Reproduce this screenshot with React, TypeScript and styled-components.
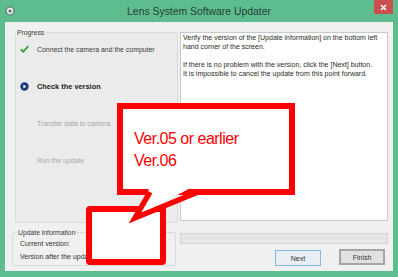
import styled, { createGlobalStyle } from "styled-components";

const GlobalStyle = createGlobalStyle`
  html, body {
    margin: 0;
    padding: 0;
    background: #ffffff;
  }
  body {
    font-family: "Liberation Sans", Arial, sans-serif;
  }
  * {
    box-sizing: border-box;
  }
`;

type StepState = "done" | "current" | "todo";

const steps: { label: string; state: StepState }[] = [
  { label: "Connect the camera and the computer", state: "done" },
  { label: "Check the version", state: "current" },
  { label: "Transfer data to camera", state: "todo" },
  { label: "Run the update", state: "todo" },
];

function StepIcon({ state }: { state: StepState }) {
  if (state === "done") {
    return (
      <svg width="9" height="8" viewBox="0 0 9 8">
        <path d="M0.8 4.2 L3.3 6.6 L8.3 1.2" fill="none" stroke="#37a13c" strokeWidth="1.9" />
      </svg>
    );
  }
  if (state === "current") {
    return (
      <svg width="9" height="9" viewBox="0 0 9 9">
        <circle cx="4.5" cy="4.5" r="4.2" fill="#1d3a78" />
        <path d="M3.4 2.6 L6.3 4.5 L3.4 6.4 Z" fill="#ffffff" />
      </svg>
    );
  }
  return null;
}

export default function App() {
  return (
    <>
      <GlobalStyle />
      <Window>
        <TitleBar>
          <AppIcon>
            <svg width="10" height="10" viewBox="0 0 10 10">
              <circle cx="5" cy="5" r="4" fill="#e4ece8" stroke="#66766e" strokeWidth="1.2" />
              <circle cx="5" cy="5" r="1.6" fill="#66766e" />
            </svg>
          </AppIcon>
          <Title>Lens System Software Updater</Title>
          <CloseButton>
            <svg width="7" height="7" viewBox="0 0 7 7">
              <path d="M1 1 L6 6 M6 1 L1 6" stroke="#ffffff" strokeWidth="1.5" />
            </svg>
          </CloseButton>
        </TitleBar>
        <Client>
          <TopRow>
            <ProgressGroup>
              <Legend>Progress</Legend>
              <StepList>
                {steps.map((step) => (
                  <Step key={step.label}>
                    <IconSlot>
                      <StepIcon state={step.state} />
                    </IconSlot>
                    <StepLabel $state={step.state}>{step.label}</StepLabel>
                  </Step>
                ))}
              </StepList>
            </ProgressGroup>
            <TextPane>
              <p>
                Verify the version of the [Update information] on the bottom left
                <br />
                hand corner of the screen.
              </p>
              <p>
                If there is no problem with the version, click the [Next] button.
                <br />
                It is impossible to cancel the update from this point forward.
              </p>
            </TextPane>
          </TopRow>
          <BottomRow>
            <UpdateGroup>
              <Legend $inset={4}>Update information</Legend>
              <InfoList>
                <InfoRow>Current version:</InfoRow>
                <InfoRow>Version after the update:</InfoRow>
              </InfoList>
            </UpdateGroup>
            <ActionColumn>
              <ProgressBar />
              <ButtonRow>
                <DialogButton $focused>Next</DialogButton>
                <DialogButton $isDefault>Finish</DialogButton>
              </ButtonRow>
            </ActionColumn>
          </BottomRow>
        </Client>

        <Callout>
          <CalloutLine>Ver.05 or earlier</CalloutLine>
          <CalloutLine>Ver.06</CalloutLine>
        </Callout>
        <TargetBox />
        <Tail viewBox="0 0 398 277" width="398" height="277">
          <polygon points="151,185 196,185 135,218" fill="#ffffff" />
          <polyline
            points="150,192 135,218 198,192"
            fill="none"
            stroke="#ff0000"
            strokeWidth="5.5"
            strokeLinejoin="miter"
          />
        </Tail>
      </Window>
    </>
  );
}

const Window = styled.div`
  position: relative;
  width: 398px;
  height: 277px;
  background: #5ebd8e;
  display: flex;
  flex-direction: column;
  padding: 0 5px 6px 5px;
  overflow: hidden;
`;

const TitleBar = styled.div`
  height: 22px;
  display: grid;
  grid-template-columns: 1fr auto 1fr;
  align-items: center;
`;

const AppIcon = styled.div`
  justify-self: start;
  display: flex;
  margin-top: -1px;
`;

const Title = styled.div`
  font-size: 10.4px;
  color: #263d33;
  margin-top: 1px;
`;

const CloseButton = styled.div`
  justify-self: end;
  align-self: start;
  width: 19px;
  height: 14px;
  background: #c9504f;
  display: flex;
  align-items: center;
  justify-content: center;
`;

const Client = styled.div`
  flex: 1;
  background: #f0f0f0;
  display: flex;
  flex-direction: column;
  padding-top: 6px;
`;

const TopRow = styled.div`
  display: flex;
  align-items: flex-start;
  gap: 2px;
  padding-left: 10px;
`;

const ProgressGroup = styled.fieldset`
  width: 163px;
  height: 195px;
  margin: 0;
  padding: 0;
  border: 1px solid #dadada;
  border-radius: 2px;
  background: #ebebeb;
`;

const Legend = styled.legend<{ $inset?: number }>`
  font-size: 6.8px;
  line-height: 9px;
  padding: 0 1px;
  margin-left: ${(p) => p.$inset ?? 0}px;
  color: #3a3a3a;
`;

const StepList = styled.div`
  display: flex;
  flex-direction: column;
  gap: 23px;
  padding: 5px 0 0 4px;
`;

const Step = styled.div`
  display: flex;
  align-items: center;
  gap: 8px;
  height: 14px;
`;

const IconSlot = styled.div`
  width: 9px;
  display: flex;
  justify-content: center;
`;

const StepLabel = styled.span<{ $state: StepState }>`
  font-size: ${(p) => (p.$state === "current" ? "7.4px" : "6.9px")};
  font-weight: ${(p) => (p.$state === "current" ? 700 : 400)};
  color: ${(p) =>
    p.$state === "current" ? "#1c1c1c" : p.$state === "done" ? "#3a3a3a" : "#a8a8a8"};
`;

const TextPane = styled.div`
  margin-top: 4px;
  width: 208px;
  height: 189px;
  background: #ffffff;
  border: 1px solid #c9c9c9;
  padding: 0 2px;
  font-size: 7px;
  line-height: 9px;
  color: #2a2a2a;
  white-space: nowrap;
  p {
    margin: 0 0 9px 0;
  }
`;

const BottomRow = styled.div`
  display: flex;
  align-items: flex-start;
  gap: 4px;
  padding-left: 7px;
  margin-top: 5px;
`;

const UpdateGroup = styled.fieldset`
  width: 164px;
  height: 38px;
  margin: 0;
  padding: 0;
  border: 1px solid #dadada;
  border-radius: 2px;
`;

const InfoList = styled.div`
  display: flex;
  flex-direction: column;
  padding-left: 7px;
`;

const InfoRow = styled.div`
  font-size: 7px;
  line-height: 13px;
  color: #333333;
  white-space: nowrap;
`;

const ActionColumn = styled.div`
  width: 208px;
  display: flex;
  flex-direction: column;
`;

const ProgressBar = styled.div`
  margin-top: 5px;
  height: 11px;
  background: #e6e6e6;
  border: 1px solid #d3d3d3;
`;

const ButtonRow = styled.div`
  display: flex;
  justify-content: flex-end;
  gap: 18px;
  margin-top: 6px;
  padding-right: 3px;
`;

const DialogButton = styled.button<{ $focused?: boolean; $isDefault?: boolean }>`
  width: 46px;
  height: 16px;
  padding: 0;
  font-family: "Liberation Sans", Arial, sans-serif;
  font-size: 7px;
  color: #333333;
  background: ${(p) => (p.$focused ? "#e8eef3" : "#e1e1e1")};
  border: ${(p) => (p.$isDefault ? "2px solid #a6a6a6" : "1px solid #86b8e6")};
  margin-top: ${(p) => (p.$isDefault ? "-1px" : "0")};
`;

const Callout = styled.div`
  position: absolute;
  left: 117px;
  top: 103px;
  width: 178px;
  height: 92px;
  background: #ffffff;
  border: 6px solid #ff0000;
  padding: 19px 0 0 11px;
`;

const CalloutLine = styled.div`
  font-size: 16px;
  line-height: 22px;
  letter-spacing: -0.5px;
  color: #ff0000;
`;

const TargetBox = styled.div`
  position: absolute;
  left: 86px;
  top: 206px;
  width: 80px;
  height: 59px;
  background: #ffffff;
  border: 6px solid #ff0000;
  border-radius: 4px;
`;

const Tail = styled.svg`
  position: absolute;
  left: 0;
  top: 0;
  pointer-events: none;
`;
